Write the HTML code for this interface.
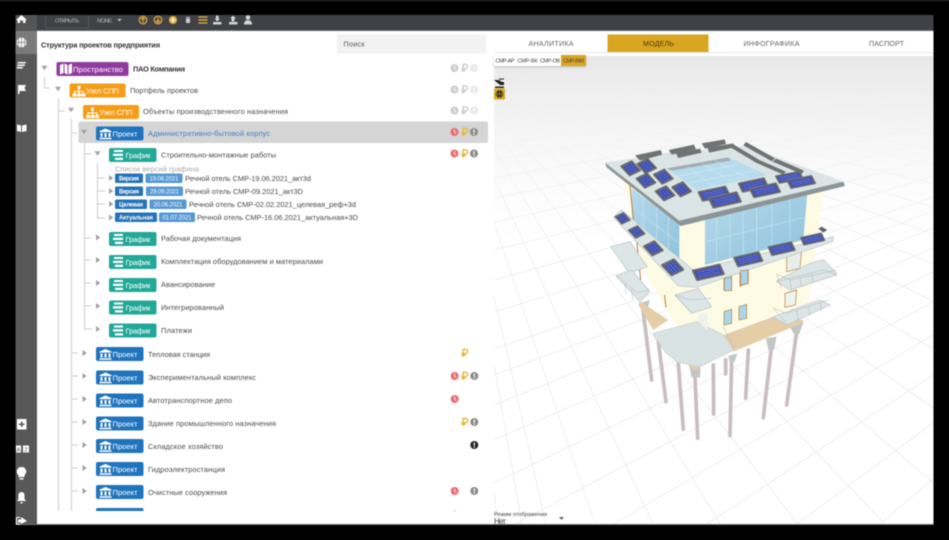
<!DOCTYPE html>
<html lang="ru"><head><meta charset="utf-8"><title>Структура проектов</title>
<style>
html,body{margin:0;padding:0;background:#000;width:949px;height:540px;overflow:hidden}
#f{position:absolute;left:0;top:0;width:949px;height:540px;overflow:hidden;contain:strict}
svg{display:block;width:949px;height:540px;overflow:hidden;filter:blur(.45px)}
text{font-family:"Liberation Sans",sans-serif;font-size:7.4px;fill:#444}
.w{fill:#fff;font-size:7.6px}
.l{fill:#4a4a4a}
.s{fill:#fff;font-size:6px;font-weight:bold}
.t{fill:#666;font-size:7.2px}
.g{stroke:#ccc;stroke-width:1;fill:none}
</style></head><body><div id="f">
<svg viewBox="0 0 949 540" xmlns="http://www.w3.org/2000/svg">
<defs>
<clipPath id="vc"><rect x="494" y="56" width="439" height="468"/></clipPath>
<clipPath id="tc"><rect x="37" y="31" width="457" height="480"/></clipPath>
<linearGradient id="fade" x1="0" y1="0" x2="0" y2="1"><stop offset="0" stop-color="#e9e9e9"/><stop offset=".35" stop-color="#f3f3f3" stop-opacity=".9"/><stop offset="1" stop-color="#fff" stop-opacity="0"/></linearGradient>
<linearGradient id="gl" x1="0" y1="0" x2="1" y2="1"><stop offset="0" stop-color="#b4d9ec"/><stop offset="1" stop-color="#90c3dd"/></linearGradient>
<g id="ck"><circle r="4" fill="currentColor"/><path d="M0-2.4V.2L1.5 1.6" stroke="#fff" stroke-width=".9" fill="none"/></g>
<g id="rb"><path d="M-1.4 4V-3.6H1A2 2 0 0 1 1 .6H-3M-3 2.2H1.2" stroke="currentColor" stroke-width="1.5" fill="none"/></g>
<g id="ex"><circle r="4" fill="currentColor"/><path d="M0-2.4V.6M0 1.4V2.6" stroke="#fff" stroke-width="1.3" fill="none"/></g>
<g id="map"><path d="M0 1.5 3.5 0V9.5L0 11ZM4.5 0 7.500 1.5V11L4.5 9.5ZM8.500 1.5 12 0V9.5L8.500 11Z" fill="#fff"/></g>
<g id="org"><path d="M5 0H8V3H7V5H11.5V7.5H13V10.5H9V7.5H10.5V6H7V7.5H8.500V10.5H4.500V7.5H6V6H2.500V7.5H4V10.5H0V7.5H1.500V5H6V3H5Z" fill="#fff"/></g>
<g id="bank"><path d="M6 0 12 2.600V3.600H0V2.600ZM1 4.500H3V8.500H1ZM5 4.500H7V8.500H5ZM9 4.500H11V8.500H9ZM0 9.300H12V10.800H0Z" fill="#fff"/></g>
<g id="sch"><path d="M1 0H10V2H1ZM0 3.800H10V6H0ZM2 7.800H10V10H2Z" fill="#fff"/></g>
<path id="dn" d="M-3-2.200H3L0 2.200Z" fill="#a2a2a2"/>
<path id="rt" d="M-2-3 2.300 0-2 3Z" fill="#a2a2a2"/>
<g id="pl"><polygon points="28,6 -3,21 -28,-6 3,-21" fill="#3b4cb4" stroke="#6a6a6a" stroke-width="6" stroke-linejoin="round"/><path d="M-3-15 18 8M-10.500-11 10.500 11M-18-8 3 15" stroke="#8f9ae0" stroke-width="1.5"/></g>
<g id="pr"><polygon points="40,5 29,-23 -40,-5 -29,23" fill="#3b4cb4" stroke="#6a6a6a" stroke-width="6" stroke-linejoin="round"/><path d="M-26 14 31-1M-28.500 7.500 28.500-7.500M-31 1 26-14" stroke="#8f9ae0" stroke-width="1.5"/></g>
</defs>

<rect width="949" height="540" fill="#000"/>
<rect y="0" width="949" height="1" fill="#333"/>
<rect x="15.500" y="15" width="918" height="509.500" fill="#fff"/>
<rect x="15.500" y="524" width="918" height="1" fill="#777"/>

<!-- viewer -->
<g clip-path="url(#vc)">
<rect x="494" y="56" width="439" height="468" fill="#fff"/>
<path stroke="#ebebeb" stroke-width=".8" fill="none" d="M933 73L494 130M933 82L494 145M933 90L494 160M933 100L494 178M933 112L494 198M933 125L494 222M933 141L494 250M933 158L494 280M933 176L494 312M933 197L494 349M933 211L494 375M933 228L494 405M933 248L494 440M933 272L494 483M933 302L515 524M933 335L614 524M933 375L707 524M933 423L797 524M933 479L880 524
M494 492L498 524M494 365L522 524M494 296L546 524M494 222L595 524M494 178L653 524M494 149L720 524M494 130L798 524M494 116L885 524M494 106L933 483M494 98L933 408M494 92L933 349M494 86L933 301M494 82L933 264M494 79L933 234M494 76L933 207M494 74L933 184M494 71L933 165M494 70L933 149M494 68L933 135M494 67L933 123"/>
<rect x="494" y="56" width="439" height="200" fill="url(#fade)"/>

<!-- building lower part (zoom-6 coords) -->
<g transform="translate(590 270) scale(.3333)">
<g stroke="#c9bdbf" stroke-width="11" stroke-linecap="round" fill="none">
<path d="M158 110 185 330M205 215 228 395M265 280 280 478M315 320 323 505M370 285 371 432M407 270 407 312M425 270 420 497M475 240 467 385M545 225 520 443M620 185 590 405"/>
</g>
<g fill="#c4c6c6"><polygon points="298,290 332,285 330,322 305,322"/><polygon points="528,205 560,200 552,240 535,240"/><polygon points="600,170 640,158 628,192 610,190"/><polygon points="145,100 180,90 172,120 155,120"/><polygon points="415,258 442,250 434,275 420,275"/></g>
</g>

<!-- building upper (zoom-5 coords) -->
<g transform="translate(590 130) scale(.3333)">
<polygon points="100,150 700,180 655,515 365,625 260,590 160,420" fill="#fdfbe3"/>
<polygon points="125,175 268,282 268,395 130,290" fill="url(#gl)"/>
<polygon points="345,268 652,190 640,330 345,405" fill="url(#gl)"/>
<g stroke="#d5ecf6" stroke-width="1.500" fill="none"><path d="M160 200V320M200 232V350M235 258V375M128 232 268 340M380 260V398M420 250V388M460 240V378M500 230V368M545 218V356M600 205V345M347 335 645 262"/></g>
<path d="M120 165 132 290M140 330 152 450" stroke="#b77a3f" stroke-width="3" fill="none"/>
<!-- windows -->
<g fill="#a9d6ea" stroke="#b77a3f" stroke-width="2"><polygon points="402,435 425,428 425,475 402,480"/><polygon points="450,425 475,418 475,460 450,468"/></g>
<polygon points="590,370 635,360 630,415 590,425" fill="#e8efe8" stroke="#b77a3f" stroke-width="2"/>
<!-- mid slab -->
<polygon points="70,262 95,240 310,420 730,320 728,335 320,472 265,468" fill="#dde6e7" stroke="#b9c2c3" stroke-width="2"/>
<polygon points="62,350 120,335 172,410 118,430" fill="#dde6e7" stroke="#bbc3c4" stroke-width="2"/>
<polygon points="660,400 700,388 740,430 610,470 560,452" fill="#dde6e7" stroke="#bbc3c4" stroke-width="2"/>
<!-- roof slab -->
<polygon points="45,98 50,112 272,288 765,168 760,155 268,272" fill="#8d9596"/>
<polygon points="45,98 238,68 470,48 760,155 268,272" fill="#dbe5e6"/>
<polygon points="230,115 415,82 530,135 320,180" fill="#b6dcee"/>
<polygon points="230,115 415,82 422,92 245,122" fill="#a4adb0"/>
<g stroke="#e3f2f9" stroke-width="1.300" fill="none"><path d="M290 107 370 168M335 100 425 155M375 92 475 146M260 140 440 104M290 160 495 122"/></g>
<!-- back panels -->
<g fill="#6f7374"><polygon points="135,76 212,60 217,74 150,92"/><polygon points="236,60 312,44 318,58 245,74"/><polygon points="258,70 330,56 335,68 265,84"/><polygon points="335,40 404,28 408,42 345,56"/><polygon points="352,53 430,40 434,52 358,68"/>
<polygon points="468,36 555,85 546,94 460,46"/><polygon points="430,43 508,90 498,98 425,54"/><polygon points="558,86 642,122 635,132 548,95"/><polygon points="508,90 588,125 580,134 498,98"/></g>
<!-- roof panels left -->
<use href="#pl" x="122" y="115"/><use href="#pl" x="170" y="108"/><use href="#pl" x="168" y="152"/><use href="#pl" x="220" y="140"/><use href="#pl" x="225" y="190"/><use href="#pl" x="275" y="178"/>
<!-- roof panels right -->
<g transform="translate(372 191) scale(1.15 .92)"><use href="#pr"/></g>
<g transform="translate(405 210) scale(1.18 .98)"><use href="#pr"/></g>
<g transform="translate(490 165) scale(1.08 .88)"><use href="#pr"/></g>
<g transform="translate(525 181) scale(1.12 .9)"><use href="#pr"/></g>
<g transform="translate(598 142) scale(1 .74)"><use href="#pr"/></g>
<g transform="translate(634 156) scale(1.03 .8)"><use href="#pr"/></g>
<!-- front panels -->
<g transform="translate(98 265) scale(.78)"><use href="#pl"/></g>
<g transform="translate(140 306) scale(.85)"><use href="#pl"/></g>
<g transform="translate(190 355) scale(1)"><use href="#pl"/></g>
<g transform="translate(248 412) scale(1.12)"><use href="#pl"/></g>
<g transform="translate(355 427) scale(1.15 1)"><use href="#pr"/></g>
<g transform="translate(475 388) scale(1.05 .92)"><use href="#pr"/></g>
<g transform="translate(575 356) scale(.98 .85)"><use href="#pr"/></g>
<g transform="translate(668 327) scale(.88 .75)"><use href="#pr"/></g>
<polygon points="685,296 695,290 712,300 700,308" fill="#666"/>
</g>

<!-- balconies & railings (zoom-6 coords) -->
<g transform="translate(590 270) scale(.3333)">
<polygon points="150,95 235,150 190,180 145,105" fill="#e5cda8"/>
<polygon points="400,195 550,140 640,150 640,158 430,245" fill="#e5cda8"/>
<polygon points="295,285 330,290 320,300 305,298" fill="#e5cda8"/>
<polygon points="188,190 320,155 400,195 432,240 330,290 265,278 225,245" fill="#d9e3e4" stroke="#c5d0d1" stroke-width="2"/>
<polygon points="78,18 125,0 180,65 150,95" fill="#dde6e7" stroke="#bbc3c4" stroke-width="2"/>
<polygon points="255,75 325,55 365,110 305,130" fill="#dde6e7" stroke="#b9c1c2" stroke-width="2"/>
<polygon points="560,35 700,0 740,15 600,60" fill="#dde6e7" stroke="#b9c1c2" stroke-width="2"/>
<polygon points="550,140 690,90 720,105 590,165" fill="#dde6e7" stroke="#b9c1c2" stroke-width="2"/>
<polygon points="403,25 425,22 425,62 403,62" fill="#a9d6ea" stroke="#b77a3f" stroke-width="2"/>
<polygon points="452,2 474,0 474,40 452,46" fill="#a9d6ea" stroke="#b77a3f" stroke-width="2"/>
<polygon points="402,125 425,118 425,160 402,165" fill="#a9d6ea" stroke="#b77a3f" stroke-width="2"/>
<polygon points="447,110 470,103 470,145 447,150" fill="#a9d6ea" stroke="#b77a3f" stroke-width="2"/>
<polygon points="585,70 620,60 616,105 585,112" fill="#eef3ec" stroke="#b77a3f" stroke-width="2"/>
<polygon points="325,130 352,128 352,182 325,155" fill="#eef3ec"/>
<path d="M224 75 228 112" stroke="#b77a3f" stroke-width="3"/>
<g stroke="#a3adae" stroke-width="1.300" fill="none"><path d="M80 15 140 68 178 60M255 75 300 90 365 85M560 12 600 30 740 0M550 115 590 130 715 90M255 75 300 125M560 12 575 55M550 115 590 160M400 170 432 235M600 30 605 60M630 22 635 50M665 12 670 40M620 122 625 150M655 110 660 138M690 98 695 125M105 40 108 72M125 55 128 90"/></g>
</g>
</g>

<!-- viewer UI -->
<rect x="494" y="55" width="92" height="11" fill="#fff" style="filter:drop-shadow(0 1px 1px #bbb)"/>
<rect x="561" y="55" width="25" height="11" fill="#daa520"/>
<g><text x="495.500" y="62.500" style="font-size:5.400px" textLength="19">СМР-АР</text><text x="517.500" y="62.500" style="font-size:5.400px" textLength="20">СМР-ВК</text><text x="540" y="62.500" style="font-size:5.400px" textLength="20">СМР-ОВ</text><text x="563" y="62.500" style="font-size:5.400px" textLength="21">СМР-BIM</text></g>
<path d="M494 80H499L502 82H504V85H500ZM495 86.500H504V88H495Z" fill="#222"/><path d="M499 79H504" stroke="#222"/>
<rect x="494" y="88.500" width="11" height="11" rx="1" fill="#daa520"/>
<circle cx="499.500" cy="94" r="3.800" fill="#222"/><path d="M495.700 94H503.300M499.500 90.200V97.800M497 91V97M502 91V97" stroke="#daa520" stroke-width=".5"/>
<text x="494" y="516" style="font-size:5.600px" textLength="53" fill="#666">Режим отображения</text>
<text x="494" y="524" style="font-size:8px" textLength="12" fill="#777">Нет</text>
<path d="M559 517H564L561.500 520Z" fill="#666"/>

<!-- tabs -->
<rect x="494" y="31" width="439" height="21" fill="#fff"/>
<rect x="494" y="52" width="439" height="1" fill="#e8e8e8"/>
<rect x="607.500" y="34.500" width="101" height="17.500" fill="#daa520"/>
<text class="t" x="528.500" y="46" textLength="45">АНАЛИТИКА</text>
<text x="643" y="46" textLength="31" style="font-size:7.200px;fill:#4a3a10">МОДЕЛЬ</text>
<text class="t" x="743.500" y="46" textLength="56">ИНФОГРАФИКА</text>
<text class="t" x="869" y="46" textLength="35">ПАСПОРТ</text>

<!-- sidebar -->
<rect x="15.500" y="15" width="21.500" height="509" fill="#585858"/>
<rect x="15.500" y="31" width="21.500" height="23" fill="#7b7b7b"/>
<g fill="#fff">
<circle cx="21.500" cy="42.500" r="5"/><path d="M16.500 42.500H26.500M21.500 37.500V47.500M18.500 38.500V46.500M24.500 38.500V46.500" stroke="#7b7b7b" stroke-width=".7"/>
<path d="M18 62H26L25.500 63.500H17.500ZM17.500 64.500H25L24.500 66H17ZM17 67H23L22.500 68.500H16.500Z"/>
<path d="M18 85H26L24.500 88 26 91H19.500V94H18Z"/>
<path d="M17 124.500 21 125.500V132L17 131ZM22 125.500 26.500 124.500V131L22 132Z"/>
<path fill-rule="evenodd" d="M17 419H26.500V429.500H17ZM21 421.500V423.500H19V425H21V427H22.500V425H24.500V423.500H22.500V421.500Z"/>
<rect x="16" y="445.500" width="5" height="7"/><rect x="23" y="445.500" width="6" height="7"/>
<path d="M21.500 467A4.500 4.500 0 0 1 24.500 475V477H18.500V475A4.500 4.500 0 0 1 21.500 467ZM19.500 478H23.500V479.500H19.500Z"/>
<path d="M21.500 492A3 3 0 0 1 24.500 495V499L26 501H17L18.500 499V495A3 3 0 0 1 21.500 492ZM20.500 502H22.500V503.500H20.500Z"/>
<path d="M21 517 27 521 21 524V522.500H18V519.500H21Z"/><path d="M20 517.500H16.500V524H20" stroke="#fff" fill="none"/>
</g>
<text x="16.800" y="451.500" style="font-size:5px;fill:#444">A</text><text x="24.500" y="451.500" style="font-size:5px;fill:#444">Z</text>

<!-- topbar -->
<rect x="37" y="15" width="896.500" height="15" fill="#404146"/>
<rect x="37" y="30" width="896.500" height="1" fill="#666"/>
<rect x="15.500" y="15" width="21.500" height="15" fill="#555"/>
<path fill="#fff" d="M21.500 15 27 20H25.500V23H23V20.500H20V23H17.500V20H16Z"/>
<path d="M45.500 15V28H88.500V15" stroke="#555" fill="none"/>
<text x="55" y="22.500" style="font-size:5.800px;fill:#bbb" textLength="24">ОТКРЫТЬ</text>
<text x="97" y="22.500" style="font-size:5.800px;fill:#bbb" textLength="15">NONE</text>
<path d="M117.500 19H121.500L119.500 21.500Z" fill="#ccc"/>
<g fill="none" stroke="#e9b23c" stroke-width="1.100"><circle cx="143" cy="20" r="3.800"/><path d="M143 22.500V18M141 19.500 143 17.500 145 19.500"/><circle cx="158" cy="20" r="3.800"/><path d="M158 17.500V22M156 20.500 158 22.500 160 20.500"/></g>
<circle cx="173" cy="20" r="4" fill="#e9b23c"/><path d="M170.500 20H175.500M173 17.500V22.500" stroke="#fff" stroke-width="1.100"/>
<path d="M186 17H190V18H186ZM186 18.500H190V23H186Z" fill="#ccc"/>
<path d="M198.500 17H207.500M198.500 20H207.500M198.500 23H207.500" stroke="#e9b23c" stroke-width="1.300"/>
<g fill="#d4d4d4"><path d="M216 15.500H218.500V18.500H220L217.250 21.500 214.500 18.500H216ZM213 22H221.500V24.500H213Z"/><path d="M233 15.500 236 18.500H234.500V21.500H231.500V18.500H230ZM229 22H237.500V24.500H229Z"/><circle cx="248" cy="17.500" r="2.300"/><path d="M244 24.500C244 21 246 20.300 248 20.300S252 21 252 24.500Z"/></g>

<!-- tree panel -->
<text x="41" y="47.500" style="font-size:7.400px;font-weight:bold;fill:#333" textLength="119">Структура проектов предприятия</text>
<rect x="337" y="34.500" width="149" height="19" fill="#f2f2f2"/>
<text x="343.500" y="46.700" textLength="21" style="font-size:7.200px;fill:#555">Поиск</text>

<g clip-path="url(#tc)">
<rect x="78.500" y="121.500" width="409.500" height="21.500" rx="2" fill="#d5d5d5"/>
<!-- lines -->
<path class="g" d="M44.500 77V88H50M58.500 98V511M58.500 111H65M71.500 119V511M71.500 133H77M71.500 353H78M71.500 376H78M71.500 399H78M71.500 422H78M71.500 445H78M71.500 468H78M71.500 491H78M84.500 142V329H92M84.500 154H91M84.500 238H91M84.500 260H91M84.500 283H91M84.500 306H91M97.500 163V218H105M97.500 178H105M97.500 191H105M97.500 204H105"/>
<!-- arrows -->
<use href="#dn" x="44.500" y="68"/><use href="#dn" x="58" y="89"/><use href="#dn" x="71" y="110"/><use href="#dn" x="84" y="132"/><use href="#dn" x="97.500" y="153.500"/>
<use href="#rt" x="111" y="178"/><use href="#rt" x="111" y="191"/><use href="#rt" x="111" y="204"/><use href="#rt" x="111" y="217.500"/>
<use href="#rt" x="98" y="237.500"/><use href="#rt" x="98" y="260"/><use href="#rt" x="98" y="283"/><use href="#rt" x="98" y="306"/><use href="#rt" x="98" y="329"/>
<use href="#rt" x="84.500" y="353"/><use href="#rt" x="84.500" y="376"/><use href="#rt" x="84.500" y="399"/><use href="#rt" x="84.500" y="422"/><use href="#rt" x="84.500" y="445"/><use href="#rt" x="84.500" y="468"/><use href="#rt" x="84.500" y="491"/>

<!-- badges -->
<rect x="56.500" y="62" width="72" height="14" rx="2" fill="#8f3c9e"/><use href="#map" x="60" y="63.500"/><text class="w" x="73" y="72" textLength="50">Пространство</text>
<rect x="69.500" y="83.500" width="56" height="14" rx="2" fill="#f59d16"/><use href="#org" x="72.500" y="86"/><text class="w" x="86" y="93.500" textLength="33">Узел СПП</text>
<rect x="83" y="105" width="56" height="14" rx="2" fill="#f59d16"/><use href="#org" x="86" y="107.500"/><text class="w" x="99.500" y="115" textLength="33">Узел СПП</text>
<rect x="96" y="126.500" width="47.500" height="14" rx="2" fill="#1f74bd"/><use href="#bank" x="99.500" y="128.500"/><text class="w" x="112.500" y="136.500" textLength="25">Проект</text>
<rect x="109" y="148" width="47.500" height="14" rx="2" fill="#22a897"/><use href="#sch" x="113" y="150"/><text class="w" x="125.500" y="158" textLength="25">График</text>
<rect x="109" y="232" width="47.500" height="14" rx="2" fill="#22a897"/><use href="#sch" x="113" y="234"/><text class="w" x="125.500" y="242" textLength="25">График</text>
<rect x="109" y="255" width="47.500" height="14" rx="2" fill="#22a897"/><use href="#sch" x="113" y="257"/><text class="w" x="125.500" y="265" textLength="25">График</text>
<rect x="109" y="278" width="47.500" height="14" rx="2" fill="#22a897"/><use href="#sch" x="113" y="280"/><text class="w" x="125.500" y="288" textLength="25">График</text>
<rect x="109" y="300.500" width="47.500" height="14" rx="2" fill="#22a897"/><use href="#sch" x="113" y="302.500"/><text class="w" x="125.500" y="310.500" textLength="25">График</text>
<rect x="109" y="323.500" width="47.500" height="14" rx="2" fill="#22a897"/><use href="#sch" x="113" y="325.500"/><text class="w" x="125.500" y="333.500" textLength="25">График</text>
<rect x="96" y="347" width="47.500" height="14" rx="2" fill="#1f74bd"/><use href="#bank" x="99.500" y="349"/><text class="w" x="112.500" y="357" textLength="25">Проект</text>
<rect x="96" y="370.500" width="47.500" height="14" rx="2" fill="#1f74bd"/><use href="#bank" x="99.500" y="372.500"/><text class="w" x="112.500" y="380.500" textLength="25">Проект</text>
<rect x="96" y="393.500" width="47.500" height="14" rx="2" fill="#1f74bd"/><use href="#bank" x="99.500" y="395.500"/><text class="w" x="112.500" y="403.500" textLength="25">Проект</text>
<rect x="96" y="416.500" width="47.500" height="14" rx="2" fill="#1f74bd"/><use href="#bank" x="99.500" y="418.500"/><text class="w" x="112.500" y="426.500" textLength="25">Проект</text>
<rect x="96" y="439" width="47.500" height="14" rx="2" fill="#1f74bd"/><use href="#bank" x="99.500" y="441"/><text class="w" x="112.500" y="449" textLength="25">Проект</text>
<rect x="96" y="462" width="47.500" height="14" rx="2" fill="#1f74bd"/><use href="#bank" x="99.500" y="464"/><text class="w" x="112.500" y="472" textLength="25">Проект</text>
<rect x="96" y="485" width="47.500" height="14" rx="2" fill="#1f74bd"/><use href="#bank" x="99.500" y="487"/><text class="w" x="112.500" y="495" textLength="25">Проект</text>
<rect x="96" y="508" width="47.500" height="14" rx="2" fill="#1f74bd"/>

<!-- labels -->
<text x="133" y="71.500" textLength="52" style="font-weight:bold;fill:#333">ПАО Компания</text>
<text class="l" x="130" y="92.800" textLength="68">Портфель проектов</text>
<text class="l" x="143" y="114" textLength="145">Объекты производственного назначения</text>
<text x="148" y="135.800" textLength="122" style="fill:#3f7fc4">Административно-бытовой корпус</text>
<text class="l" x="161" y="157.500" textLength="115">Строительно-монтажные работы</text>
<text x="115" y="171.500" textLength="84" style="fill:#a8a8a8">Список версий графина</text>

<rect x="115" y="173.500" width="28" height="9.500" rx="1.500" fill="#2572b8"/><text class="s" x="119" y="180.500" textLength="20">Версия</text>
<rect x="145.500" y="173.500" width="37" height="9.500" rx="1.500" fill="#5597d3"/><text class="s" x="149.500" y="180.500" textLength="29" style="font-weight:normal">19.06.2021</text>
<text class="l" x="185" y="181" textLength="126">Речной отель СМР-19.06.2021_акт3d</text>
<rect x="115" y="186.500" width="28" height="9.500" rx="1.500" fill="#2572b8"/><text class="s" x="119" y="193.500" textLength="20">Версия</text>
<rect x="146" y="186.500" width="37" height="9.500" rx="1.500" fill="#5597d3"/><text class="s" x="150" y="193.500" textLength="29" style="font-weight:normal">29.09.2021</text>
<text class="l" x="185" y="194" textLength="118">Речной отель СМР-09.2021_акт3D</text>
<rect x="115" y="199.500" width="32" height="9.500" rx="1.500" fill="#2572b8"/><text class="s" x="119" y="206.500" textLength="24">Целевая</text>
<rect x="149.500" y="199.500" width="37" height="9.500" rx="1.500" fill="#5597d3"/><text class="s" x="153.500" y="206.500" textLength="29" style="font-weight:normal">20.06.2021</text>
<text class="l" x="189" y="207" textLength="167">Речной отель СМР-02.02.2021_целевая_реф+3d</text>
<rect x="115" y="212.500" width="42" height="9.500" rx="1.500" fill="#2572b8"/><text class="s" x="119" y="219.500" textLength="34">Актуальная</text>
<rect x="159" y="212.500" width="36" height="9.500" rx="1.500" fill="#5597d3"/><text class="s" x="162.500" y="219.500" textLength="29" style="font-weight:normal">01.07.2021</text>
<text class="l" x="197" y="220" textLength="161">Речной отель СМР-16.06.2021_актуальная+3D</text>

<text class="l" x="161" y="241" textLength="80">Рабочая документация</text>
<text class="l" x="161" y="264" textLength="162">Комплектация оборудованием и материалами</text>
<text class="l" x="161" y="287" textLength="54">Авансирование</text>
<text class="l" x="161" y="310" textLength="63">Интегрированный</text>
<text class="l" x="161" y="333" textLength="31">Платежи</text>
<text class="l" x="148" y="357" textLength="62">Тепловая станция</text>
<text class="l" x="148" y="380" textLength="108">Экспериментальный комплекс</text>
<text class="l" x="148" y="403" textLength="84">Автотранспортное депо</text>
<text class="l" x="148" y="426" textLength="128">Здание промышленного назначения</text>
<text class="l" x="148" y="448.800" textLength="75">Складское хозяйство</text>
<text class="l" x="148" y="471.800" textLength="77">Гидроэлектростанция</text>
<text class="l" x="148" y="494.800" textLength="79">Очистные сооружения</text>

<!-- status -->
<g color="#cdcdcd"><use href="#ck" x="454.500" y="68"/><use href="#rb" x="464.500" y="68"/><use href="#ck" x="454.500" y="89.500"/><use href="#rb" x="464.500" y="89.500"/><use href="#ck" x="454.500" y="110.500"/><use href="#rb" x="464.500" y="110.500"/></g>
<g color="#e8e8e8"><use href="#ex" x="474" y="68"/><use href="#ex" x="474" y="89.500"/><use href="#ex" x="474" y="110.500"/></g>
<g color="#ef6a74"><use href="#ck" x="454.500" y="132"/><use href="#ck" x="454.500" y="153.500"/><use href="#ck" x="454.700" y="376"/><use href="#ck" x="454.700" y="399"/><use href="#ck" x="454.700" y="491"/><use href="#ck" x="454.700" y="514.500"/></g>
<g color="#e8b93c"><use href="#rb" x="464.500" y="132"/><use href="#rb" x="464.500" y="153.500"/><use href="#rb" x="464.500" y="353"/><use href="#rb" x="464.500" y="376"/><use href="#rb" x="464.500" y="422"/></g>
<g color="#8b8b8b"><use href="#ex" x="474" y="132"/><use href="#ex" x="474" y="153.500"/><use href="#ex" x="474.300" y="376"/><use href="#ex" x="474.300" y="422"/><use href="#ex" x="474.300" y="491"/></g>
<use href="#ex" x="474.300" y="445" color="#262626"/>
</g>
</svg>
</div></body></html>
